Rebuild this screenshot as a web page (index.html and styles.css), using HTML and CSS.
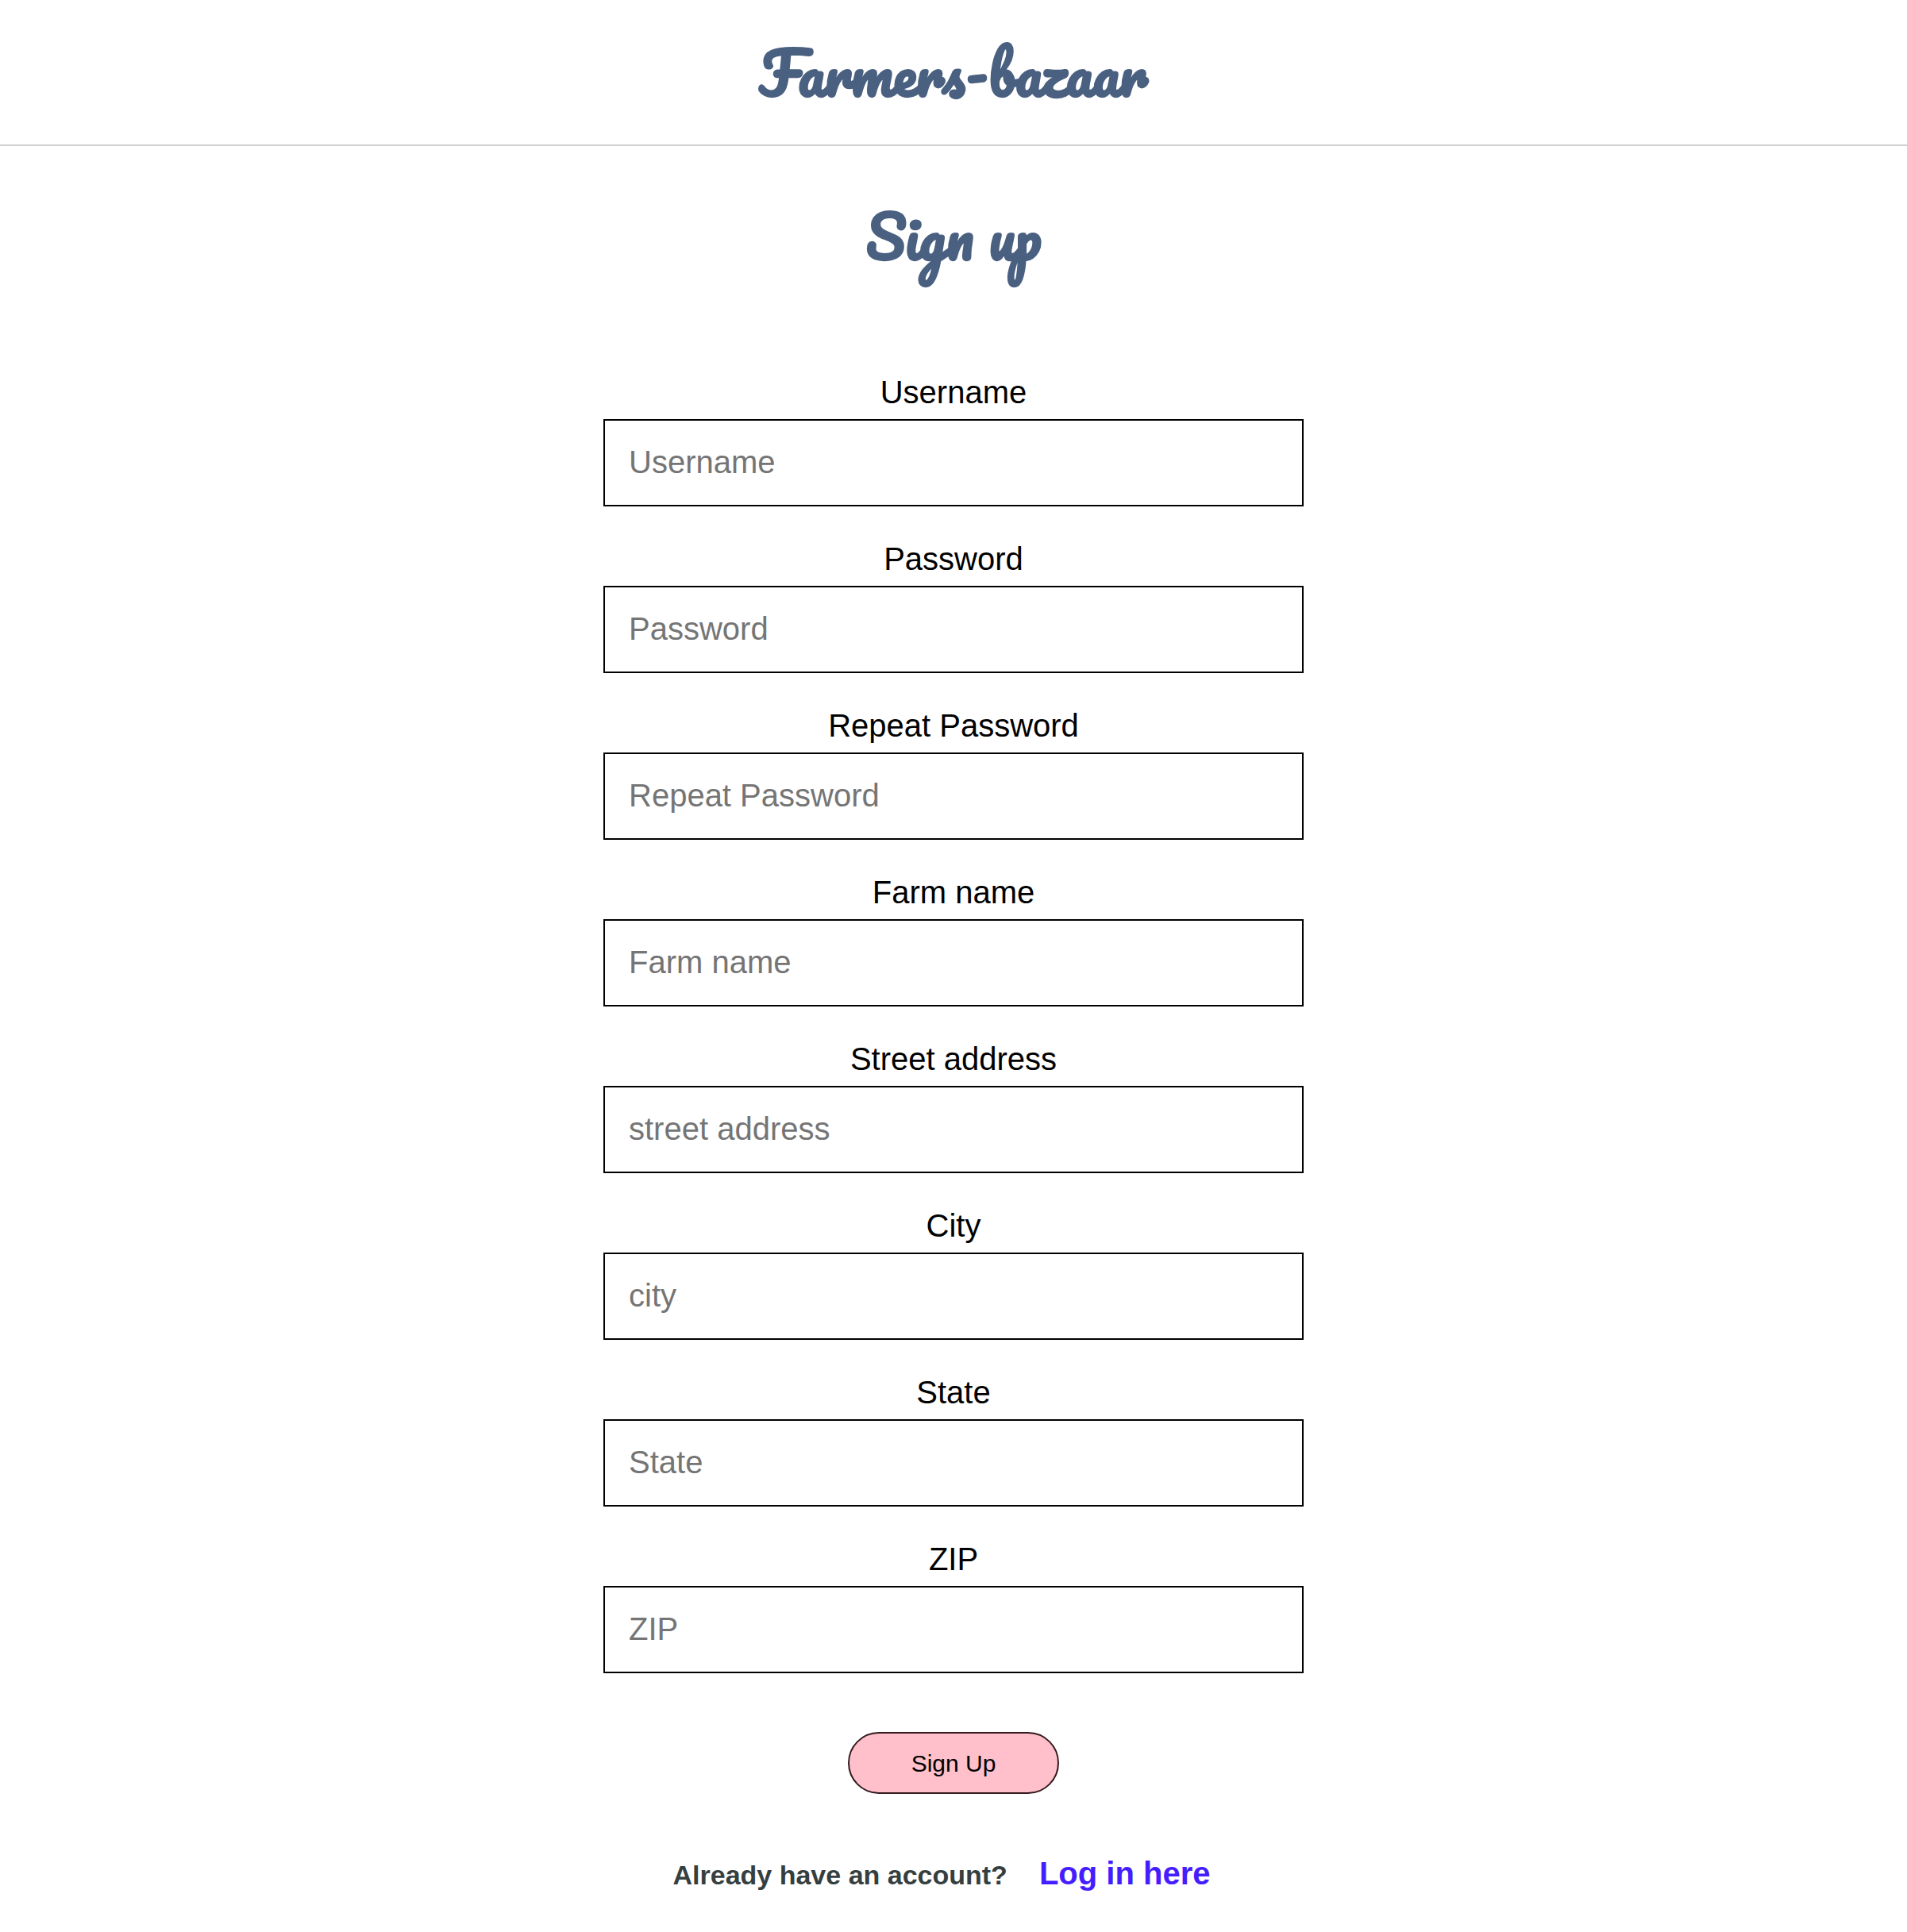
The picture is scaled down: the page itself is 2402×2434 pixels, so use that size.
FILE: index.html
```html
<!DOCTYPE html>
<html lang="en">
<head>
<meta charset="utf-8">
<title>Farmers-bazaar</title>
<link rel="stylesheet" href="styles.css">
</head>
<body>
<header class="header"><h1 class="script brand">Farmers-bazaar</h1></header>
<main class="main">
  <h2 class="script title">Sign up</h2>
  <form class="form">
    <div class="field"><label for="username">Username</label><input id="username" type="text" placeholder="Username"></div>
    <div class="field"><label for="password">Password</label><input id="password" type="password" placeholder="Password"></div>
    <div class="field"><label for="repeat">Repeat Password</label><input id="repeat" type="password" placeholder="Repeat Password"></div>
    <div class="field"><label for="farm">Farm name</label><input id="farm" type="text" placeholder="Farm name"></div>
    <div class="field"><label for="street">Street address</label><input id="street" type="text" placeholder="street address"></div>
    <div class="field"><label for="city">City</label><input id="city" type="text" placeholder="city"></div>
    <div class="field"><label for="state">State</label><input id="state" type="text" placeholder="State"></div>
    <div class="field"><label for="zip">ZIP</label><input id="zip" type="text" placeholder="ZIP"></div>
    <button class="submit" type="button">Sign Up</button>
  </form>
  <p class="login"><span>Already have an account?</span><a href="#">Log in here</a></p>
</main>
</body>
</html>
```
FILE: styles.css
```css
* { box-sizing: border-box; }
body {
  margin: 0;
  background: #fff;
  color: #000;
  font-family: Helvetica, "Liberation Sans", Arial, sans-serif;
  font-size: 40px;
}
.script {
  margin: 0;
  color: #4a6080;
  font-family: Pacifico, Lato, cursive;
  font-weight: bold;
  font-size: 72px;
  line-height: 100px;
  text-align: center;
  white-space: nowrap;
}
.header {
  height: 184px;
  padding-top: 42px;
  border-bottom: 2px solid #d0d0d0;
}
.main {
  display: flex;
  flex-direction: column;
  align-items: center;
}
.title {
  margin-top: 64px;
  height: 223px;
}
.form {
  width: 882px;
  display: flex;
  flex-direction: column;
  align-items: center;
  gap: 43px;
}
.field {
  width: 100%;
  display: flex;
  flex-direction: column;
  gap: 11px;
}
.field label {
  line-height: 46px;
  text-align: center;
}
.field input {
  width: 100%;
  height: 110px;
  padding: 0 30px 2px;
  border: 2px solid #000;
  border-radius: 0;
  background: #fff;
  font: inherit;
}
.field input::placeholder { color: #757575; }
.submit {
  width: 266px;
  height: 78px;
  margin-top: 31px;
  padding: 1px 0 0;
  border: 2px solid #341a1e;
  border-radius: 40px;
  background: #ffc0cb;
  color: #000;
  font-family: inherit;
  font-size: 30px;
}
.login {
  display: flex;
  align-items: baseline;
  gap: 40px;
  margin: 77px 0 0;
  padding-right: 30px;
  font-weight: bold;
  line-height: 46px;
}
.login span {
  color: #363f40;
  font-size: 34px;
}
.login a {
  color: #451eff;
  text-decoration: none;
}
```
